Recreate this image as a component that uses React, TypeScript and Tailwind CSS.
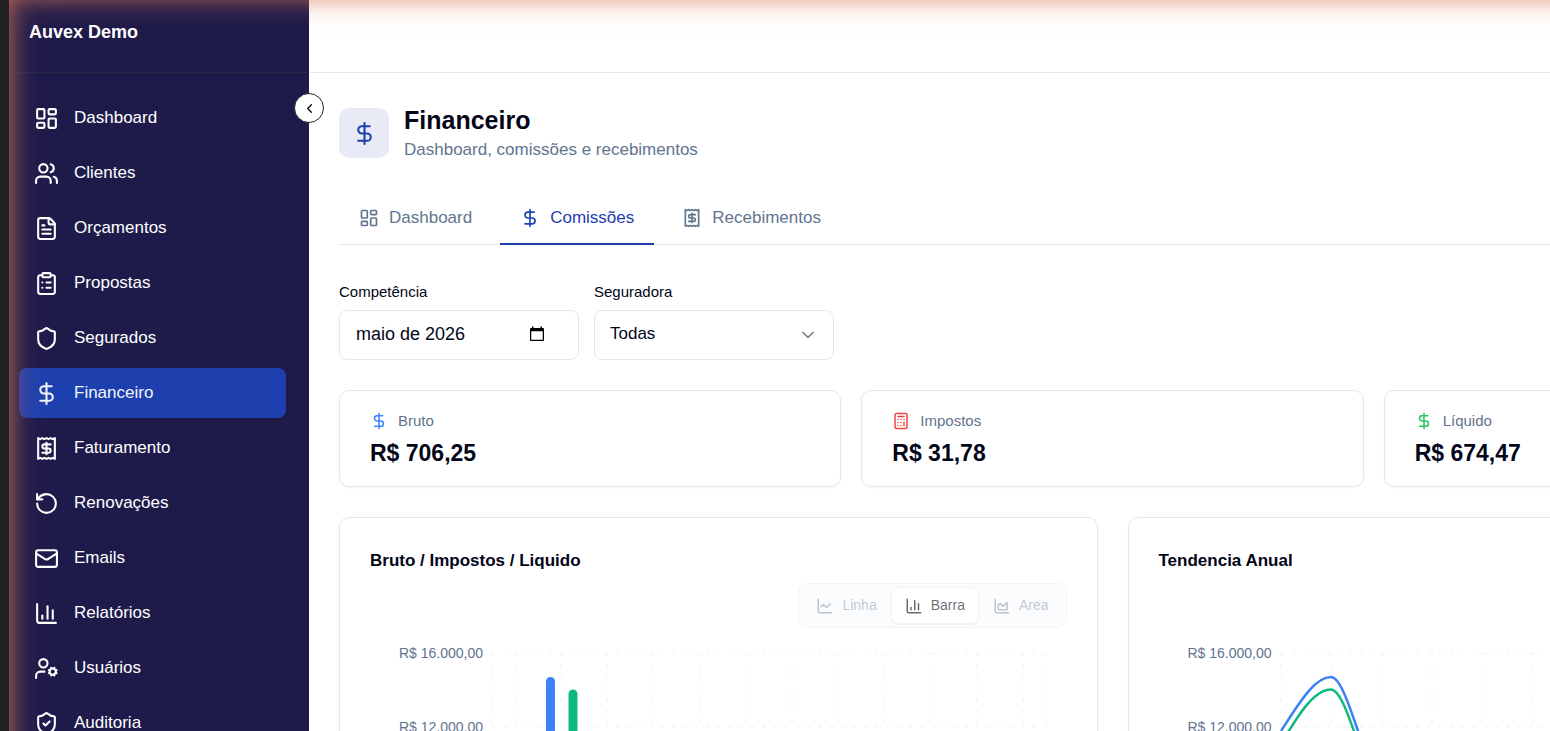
import React from "react";
import {
  Calculator,
  ChartArea,
  ChartColumn,
  ChartLine,
  ChevronDown,
  ChevronLeft,
  ClipboardList,
  DollarSign,
  FileText,
  LayoutDashboard,
  Mail,
  RotateCcw,
  Shield,
  ShieldCheck,
  UserCog,
  Users,
} from "lucide-react";

type IconType = React.ComponentType<{ className?: string; strokeWidth?: number }>;

const ReceiptIcon: IconType = ({ className }) => (
  <svg
    className={className}
    viewBox="0 0 24 24"
    fill="none"
    stroke="currentColor"
    strokeWidth="2"
    strokeLinecap="round"
    strokeLinejoin="round"
    aria-hidden="true"
  >
    <path d="M4 2v20l2-1 2 1 2-1 2 1 2-1 2 1 2-1 2 1V2l-2 1-2-1-2 1-2-1-2 1-2-1-2 1Z" />
    <path d="M16 8h-6a2 2 0 1 0 0 4h4a2 2 0 1 1 0 4H8" />
    <path d="M12 17.5v-11" />
  </svg>
);

const CalendarIcon = () => (
  <svg className="size-5" viewBox="0 0 20 20" aria-hidden="true">
    <path
      fill="currentColor"
      fillRule="evenodd"
      d="M5 2.500h1.500v1.500h7V2.500H15v1.500h1a1 1 0 0 1 1 1v11a1 1 0 0 1-1 1H4a1 1 0 0 1-1-1V5a1 1 0 0 1 1-1h1ZM4.250 7.250v8.500h11.500v-8.500Z"
    />
  </svg>
);

const navItems: { label: string; icon: IconType; active?: boolean }[] = [
  { label: "Dashboard", icon: LayoutDashboard },
  { label: "Clientes", icon: Users },
  { label: "Orçamentos", icon: FileText },
  { label: "Propostas", icon: ClipboardList },
  { label: "Segurados", icon: Shield },
  { label: "Financeiro", icon: DollarSign, active: true },
  { label: "Faturamento", icon: ReceiptIcon },
  { label: "Renovações", icon: RotateCcw },
  { label: "Emails", icon: Mail },
  { label: "Relatórios", icon: ChartColumn },
  { label: "Usuários", icon: UserCog },
  { label: "Auditoria", icon: ShieldCheck },
];

function Sidebar() {
  return (
    <aside className="relative w-[300px] shrink-0 bg-[#1e1b4b] text-white">
      <div className="flex h-[73px] items-start border-b border-[#1f2a44] px-5 pt-[18px]">
        <span className="text-[18px] leading-7 font-bold">Auvex Demo</span>
      </div>
      <nav className="flex flex-col gap-[5px] pt-5 pr-[23px] pl-[10px]">
        {navItems.map(({ label, icon: Icon, active }) => (
          <a
            key={label}
            href="#"
            aria-current={active ? "page" : undefined}
            className={`flex h-[50px] items-center gap-[15px] rounded-lg px-[15px] text-[17px] ${
              active ? "bg-[#1e40af] text-slate-100" : ""
            }`}
          >
            <Icon className="size-[25px] shrink-0" />
            <span>{label}</span>
          </a>
        ))}
      </nav>
      <button
        type="button"
        aria-label="Recolher menu"
        className="absolute top-[93px] -right-[15px] z-10 flex size-[30px] items-center justify-center rounded-full border border-slate-800 bg-white text-slate-950"
      >
        <ChevronLeft className="size-[15px]" />
      </button>
    </aside>
  );
}

const tabs: { label: string; icon: IconType; active?: boolean }[] = [
  { label: "Dashboard", icon: LayoutDashboard },
  { label: "Comissões", icon: DollarSign, active: true },
  { label: "Recebimentos", icon: ReceiptIcon },
];

const stats: { label: string; value: string; icon: IconType; color: string }[] = [
  { label: "Bruto", value: "R$ 706,25", icon: DollarSign, color: "text-[#3b82f6]" },
  { label: "Impostos", value: "R$ 31,78", icon: Calculator, color: "text-[#ef4444]" },
  { label: "Líquido", value: "R$ 674,47", icon: DollarSign, color: "text-[#22c55e]" },
];

const modes: { label: string; icon: IconType; active?: boolean }[] = [
  { label: "Linha", icon: ChartLine },
  { label: "Barra", icon: ChartColumn, active: true },
  { label: "Area", icon: ChartArea },
];

const yLabels = ["R$ 16.000,00", "R$ 12.000,00", "R$ 8.000,00", "R$ 4.000,00", "R$ 0,00"];
const gridY = [10, 84, 158, 232, 306];
const barGridX = [1, 24, 70, 116, 162, 209, 255, 301, 347, 393, 439, 486, 532, 555];
const lineGridX = [1, 51, 102, 152, 202, 253, 303, 353, 404, 454, 504, 555];

function Chart({ gridX, children }: { gridX: number[]; children: React.ReactNode }) {
  return (
    <div className="flex gap-2 pl-[30px]">
      <div className="flex w-[83px] shrink-0 flex-col items-end gap-[54px] text-[14px] leading-5 whitespace-nowrap text-slate-500">
        {yLabels.map((label) => (
          <span key={label}>{label}</span>
        ))}
      </div>
      <svg className="h-[320px] w-[570px] shrink-0" viewBox="0 0 570 320" aria-hidden="true">
        <g stroke="#f3f4f6" strokeWidth="1.25" strokeDasharray="3.75 7.5">
          {gridY.map((y) => (
            <line key={y} x1="1" x2="555" y1={y} y2={y} />
          ))}
          {gridX.map((x) => (
            <line key={x} x1={x} x2={x} y1="10" y2="306" />
          ))}
        </g>
        {children}
      </svg>
    </div>
  );
}

export default function App() {
  return (
    <div className="flex h-screen overflow-hidden bg-[#212121] pl-[9px] font-['Liberation_Sans',Arial,sans-serif] text-slate-950">
      <div className="relative flex h-max min-h-full w-full min-w-[1907px] shrink-0 bg-white">
        <Sidebar />
        <div className="flex min-w-0 grow flex-col">
          <header className="h-[73px] shrink-0 border-b border-slate-200" />
          <main className="flex flex-col px-[30px] pt-[30px] pb-[30px]">
            <div className="flex items-center gap-[15px]">
              <div className="flex size-[50px] shrink-0 items-center justify-center rounded-[10px] bg-[#e8eaf6] text-[#1e40af]">
                <DollarSign className="size-[25px]" />
              </div>
              <div>
                <h1 className="text-[25px] leading-[35px] font-bold">Financeiro</h1>
                <p className="pb-[2px] text-[17px] leading-[23px] text-slate-500">
                  Dashboard, comissões e recebimentos
                </p>
              </div>
            </div>

            <div role="tablist" className="mt-[30px] flex gap-2 border-b border-slate-200">
              {tabs.map(({ label, icon: Icon, active }) => (
                <button
                  key={label}
                  type="button"
                  role="tab"
                  aria-selected={!!active}
                  className={`-mb-px flex h-[52px] items-center gap-[10px] border-b-2 px-5 text-[17px] ${
                    active ? "border-[#1e40af] text-[#1e40af]" : "border-transparent text-slate-500"
                  }`}
                >
                  <Icon className="size-5 shrink-0" />
                  {label}
                </button>
              ))}
            </div>

            <div className="mt-[35px] flex gap-[15px]">
              <div className="flex w-60 flex-col gap-[7px]">
                <label htmlFor="competencia" className="text-[15px] leading-[23px]">
                  Competência
                </label>
                <div className="flex h-[50px] items-center rounded-lg border border-slate-200 pr-[31px] pb-[2px] pl-4">
                  <input
                    id="competencia"
                    type="text"
                    defaultValue="maio de 2026"
                    className="w-full min-w-0 bg-transparent text-[18px] outline-none"
                  />
                  <button type="button" aria-label="Abrir calendário" className="text-black">
                    <CalendarIcon />
                  </button>
                </div>
              </div>
              <div className="flex w-60 flex-col gap-[7px]">
                <label htmlFor="seguradora" className="text-[15px] leading-[23px]">
                  Seguradora
                </label>
                <div className="relative">
                  <select
                    id="seguradora"
                    className="h-[50px] w-full appearance-none rounded-lg border border-slate-200 bg-white px-[15px] pb-[2px] text-[17px] outline-none"
                  >
                    <option>Todas</option>
                  </select>
                  <ChevronDown className="pointer-events-none absolute top-[15px] right-4 size-5 text-slate-950/50" />
                </div>
              </div>
            </div>

            <div className="mt-[30px] grid grid-cols-3 gap-5">
              {stats.map(({ label, value, icon: Icon, color }) => (
                <div
                  key={label}
                  className="flex flex-col gap-[6px] rounded-[10px] border border-slate-200 px-[30px] pt-5 pb-[17px] shadow-xs"
                >
                  <div className="flex items-center gap-[10px] text-[15px] leading-5 text-slate-500">
                    <Icon className={`size-[18px] shrink-0 ${color}`} />
                    {label}
                  </div>
                  <div className="text-[23px] leading-8 font-bold">{value}</div>
                </div>
              ))}
            </div>

            <div className="mt-[30px] grid grid-cols-2 gap-[30px]">
              <section className="rounded-[10px] border border-slate-200 p-[30px] shadow-xs">
                <h2 className="text-[17px] leading-[25px] font-bold">Bruto / Impostos / Liquido</h2>
                <div className="mt-[10px] flex justify-end">
                  <div className="flex h-[45px] items-center rounded-[10px] border border-slate-100 bg-slate-50/60 p-[3px]">
                    {modes.map(({ label, icon: Icon, active }) => (
                      <button
                        key={label}
                        type="button"
                        aria-pressed={!!active}
                        className={`flex h-[37px] items-center gap-2 rounded-lg border px-[13px] text-[14px] ${
                          active
                            ? "border-slate-100 bg-white text-slate-950/60 shadow-xs"
                            : "border-transparent text-slate-500/40"
                        }`}
                      >
                        <Icon className="size-[18px] shrink-0" />
                        {label}
                      </button>
                    ))}
                  </div>
                </div>
                <div className="mt-[15px]">
                  <Chart gridX={barGridX}>
                    <path d="M55 306V38.500a4.500 4.500 0 0 1 9 0V306Z" fill="#3b82f6" />
                    <path d="M77.500 306V51a4.500 4.500 0 0 1 9 0V306Z" fill="#10b981" />
                  </Chart>
                </div>
              </section>

              <section className="rounded-[10px] border border-slate-200 p-[30px] shadow-xs">
                <h2 className="text-[17px] leading-[25px] font-bold">Tendencia Anual</h2>
                <div className="mt-[70px]">
                  <Chart gridX={lineGridX}>
                    <g fill="none" strokeWidth="2.5">
                      <path
                        d="M1 88C18 62 34 34 51 34C68 34 85 133 102 133"
                        stroke="#3b82f6"
                      />
                      <path
                        d="M1 101C18 72 34 46.500 51 46.500C68 46.500 85 144 102 144"
                        stroke="#10b981"
                      />
                    </g>
                  </Chart>
                </div>
              </section>
            </div>
          </main>
        </div>
        <div className="pointer-events-none absolute inset-x-0 -top-1 bottom-0 z-20 shadow-[inset_0_0_19px_rgba(217,119,87,0.6),inset_0_0_31px_rgba(217,119,87,0.4),inset_0_0_44px_rgba(217,119,87,0.2)]" />
      </div>
    </div>
  );
}
